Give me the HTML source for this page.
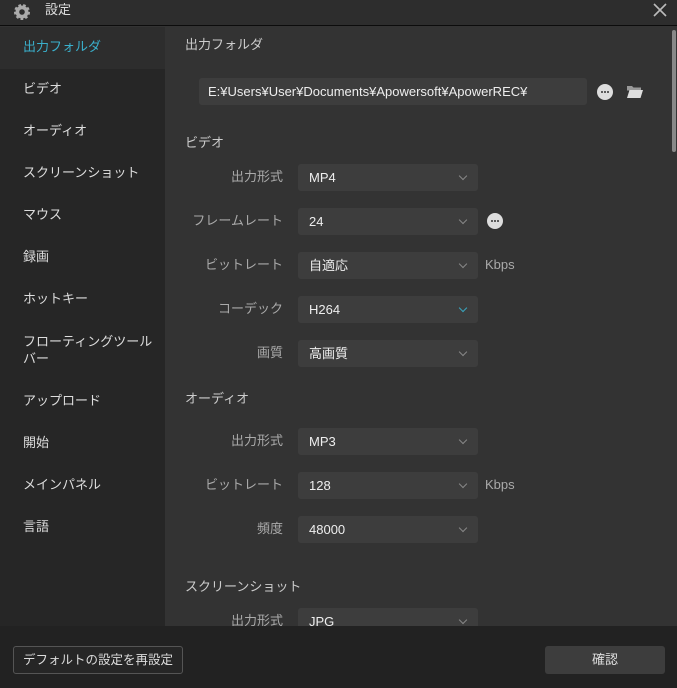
<!DOCTYPE html><html><head><meta charset="utf-8"><style>
*{margin:0;padding:0;box-sizing:border-box}
body{width:677px;height:688px;overflow:hidden;background:#333;font-family:"Liberation Sans","Noto Sans CJK JP",sans-serif;font-size:13px;color:#ddd;position:relative}
.a{position:absolute}
.t{position:absolute;left:0;top:0;width:677px;height:26px;background:#2d2d2d;border-bottom:1px solid #0c0c0c}
.side{position:absolute;left:0;top:27px;width:165px;height:600px;background:#262626}
.si{position:absolute;left:23px;font-size:13px;color:#ddd;line-height:16px}
.lab{position:absolute;right:394px;color:#aaa;font-size:13px;line-height:16px;text-align:right}
.sel{position:absolute;left:298px;width:180px;height:27px;background:#3d3d3d;border-radius:3px;color:#eee;font-size:13px;line-height:27px;padding-left:11px}
.sel:after{content:"";position:absolute;right:12px;top:9px;width:5px;height:5px;border-right:1.3px solid #888;border-bottom:1.3px solid #888;transform:rotate(45deg)}
.sel.b:after{border-color:#3aa6bf}
.h{position:absolute;left:185px;font-size:13px;color:#ccc;line-height:16px}
.kb{position:absolute;left:485px;color:#aaa}
</style></head><body>
<div class="t"></div>
<svg class="a" style="left:13px;top:3px" width="18" height="18" viewBox="0 0 18 18"><circle cx="9" cy="9" r="6.5" fill="#aaa" stroke="#aaa" stroke-width="3" stroke-dasharray="2.5 2"/><circle cx="9" cy="9" r="2.8" fill="#2d2d2d"/></svg>
<div class="a" style="left:45px;top:1px;color:#ddd;line-height:18px">設定</div>
<svg class="a" style="left:653px;top:3px" width="14" height="14" viewBox="0 0 14 14"><path d="M1 1L13 13M13 1L1 13" stroke="#bbb" stroke-width="1.6"/></svg>
<div class="side"></div>
<div class="a" style="left:0;top:27px;width:165px;height:42px;background:#2d2d2d"></div>
<div class="si" style="top:39px;color:#3ab0cc">出力フォルダ</div>
<div class="si" style="top:81px">ビデオ</div>
<div class="si" style="top:123px">オーディオ</div>
<div class="si" style="top:165px">スクリーンショット</div>
<div class="si" style="top:207px">マウス</div>
<div class="si" style="top:249px">録画</div>
<div class="si" style="top:291px">ホットキー</div>
<div class="si" style="top:333px;line-height:17px">フローティングツール<br>バー</div>
<div class="si" style="top:393px">アップロード</div>
<div class="si" style="top:435px">開始</div>
<div class="si" style="top:477px">メインパネル</div>
<div class="si" style="top:519px">言語</div>
<div class="a" style="left:672px;top:30px;width:4px;height:122px;background:#888;border-radius:2px"></div>
<div class="h" style="top:37px">出力フォルダ</div>
<div class="a" style="left:199px;top:78px;width:388px;height:27px;background:#3d3d3d;border-radius:3px;line-height:27px;padding-left:9px;color:#eee">E:¥Users¥User¥Documents¥Apowersoft¥ApowerREC¥</div>
<svg class="a" style="left:597px;top:84px" width="16" height="16" viewBox="0 0 16 16"><circle cx="8" cy="8" r="8" fill="#ddd"/><circle cx="5" cy="8" r="1" fill="#333"/><circle cx="8" cy="8" r="1" fill="#333"/><circle cx="11" cy="8" r="1" fill="#333"/></svg>
<svg class="a" style="left:626px;top:84px" width="18" height="15" viewBox="0 0 18 15"><path d="M1 2h5l1.5 1.5H15v3H1z" fill="#999"/><path d="M1 14L3.5 6H17L14.5 14z" fill="#ddd"/></svg>
<div class="h" style="top:135px">ビデオ</div>
<div class="lab" style="top:169px">出力形式</div><div class="sel" style="top:164px">MP4</div>
<div class="lab" style="top:213px">フレームレート</div><div class="sel" style="top:208px">24</div>
<svg class="a" style="left:487px;top:213px" width="16" height="16" viewBox="0 0 16 16"><circle cx="8" cy="8" r="8" fill="#ddd"/><circle cx="5" cy="8" r="1" fill="#333"/><circle cx="8" cy="8" r="1" fill="#333"/><circle cx="11" cy="8" r="1" fill="#333"/></svg>
<div class="lab" style="top:257px">ビットレート</div><div class="sel" style="top:252px">自適応</div><div class="kb" style="top:257px">Kbps</div>
<div class="lab" style="top:301px">コーデック</div><div class="sel b" style="top:296px">H264</div>
<div class="lab" style="top:345px">画質</div><div class="sel" style="top:340px">高画質</div>
<div class="h" style="top:391px">オーディオ</div>
<div class="lab" style="top:433px">出力形式</div><div class="sel" style="top:428px">MP3</div>
<div class="lab" style="top:477px">ビットレート</div><div class="sel" style="top:472px">128</div><div class="kb" style="top:477px">Kbps</div>
<div class="lab" style="top:521px">頻度</div><div class="sel" style="top:516px">48000</div>
<div class="h" style="top:579px">スクリーンショット</div>
<div class="lab" style="top:613px">出力形式</div><div class="sel" style="top:608px">JPG</div>
<div class="a" style="left:0;top:626px;width:677px;height:62px;background:#222"></div>
<div class="a" style="left:13px;top:646px;width:170px;height:28px;border:1px solid #555;border-radius:3px;background:#262626;text-align:center;line-height:26px;color:#ddd;font-size:12.5px">デフォルトの設定を再設定</div>
<div class="a" style="left:545px;top:646px;width:120px;height:28px;border-radius:3px;background:#3d3d3d;text-align:center;line-height:28px;color:#ddd">確認</div>
</body></html>
